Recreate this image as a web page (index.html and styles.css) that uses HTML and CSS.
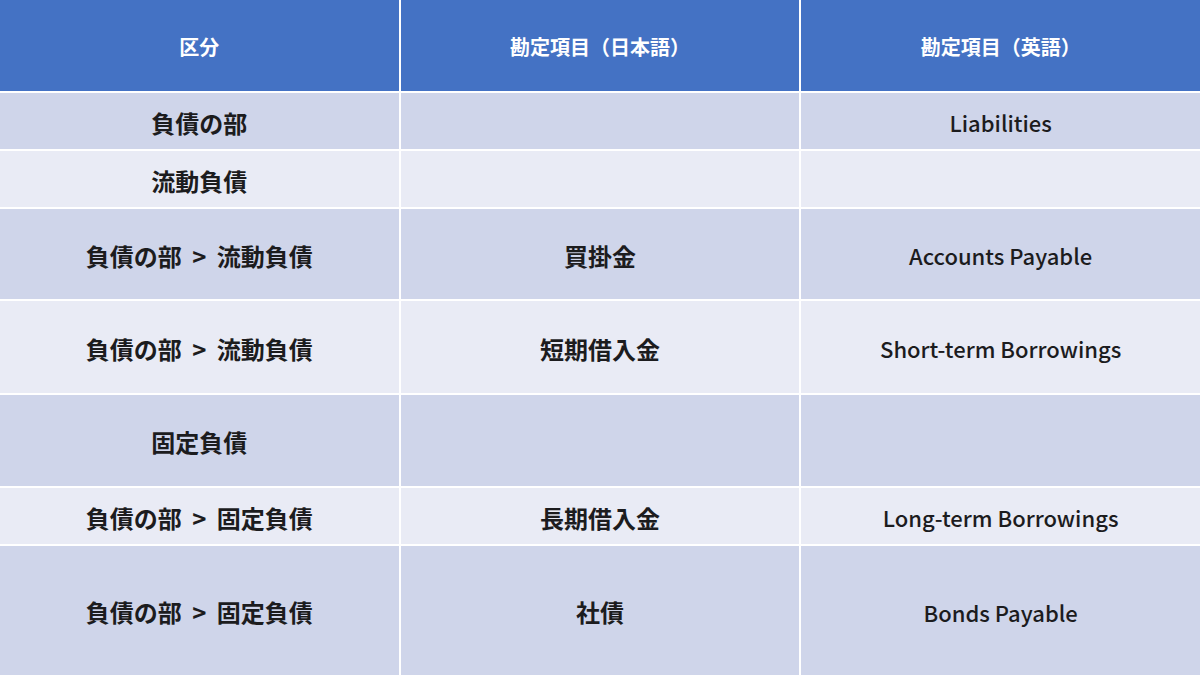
FILE: index.html
```html
<!DOCTYPE html>
<html lang="ja">
<head>
<meta charset="utf-8">
<title>負債の部</title>
<link rel="stylesheet" href="styles.css">
</head>
<body>
<div class="table">
  <div class="cell head">区分</div>
  <div class="cell head">勘定項目（日本語）</div>
  <div class="cell head">勘定項目（英語）</div>

  <div class="cell odd jp">負債の部</div>
  <div class="cell odd jp"></div>
  <div class="cell odd en">Liabilities</div>

  <div class="cell even jp">流動負債</div>
  <div class="cell even jp"></div>
  <div class="cell even en"></div>

  <div class="cell odd jp">負債の部 &gt; 流動負債</div>
  <div class="cell odd jp">買掛金</div>
  <div class="cell odd en">Accounts Payable</div>

  <div class="cell even jp">負債の部 &gt; 流動負債</div>
  <div class="cell even jp">短期借入金</div>
  <div class="cell even en">Short-term Borrowings</div>

  <div class="cell odd jp">固定負債</div>
  <div class="cell odd jp"></div>
  <div class="cell odd en"></div>

  <div class="cell even jp">負債の部 &gt; 固定負債</div>
  <div class="cell even jp">長期借入金</div>
  <div class="cell even en">Long-term Borrowings</div>

  <div class="cell odd jp">負債の部 &gt; 固定負債</div>
  <div class="cell odd jp">社債</div>
  <div class="cell odd en">Bonds Payable</div>
</div>
</body>
</html>
```

FILE: styles.css
```css
html, body {
  margin: 0;
  padding: 0;
  background: #ffffff;
}

body {
  width: 1200px;
  height: 675px;
  overflow: hidden;
  font-family: "Noto Sans CJK JP", "Noto Sans", sans-serif;
  color: #1c1c1e;
}

.table {
  display: grid;
  grid-template-columns: 1fr 1fr 1fr;
  grid-template-rows: 91px 56px 56px 90px 92px 91px 56px 129px;
  gap: 2px;
  width: 1200px;
  height: 675px;
  background: #ffffff;
}

.cell {
  display: flex;
  align-items: center;
  justify-content: center;
  text-align: center;
  white-space: nowrap;
  padding-top: 2px;
  box-sizing: border-box;
}

.head {
  background: #4472c4;
  color: #ffffff;
  font-size: 20px;
  font-weight: 700;
}

.odd {
  background: #cfd5ea;
}

.even {
  background: #e9ebf5;
}

.jp {
  font-size: 24px;
  font-weight: 700;
  word-spacing: 5px;
}

.en {
  font-size: 22px;
  font-weight: 500;
}
```
